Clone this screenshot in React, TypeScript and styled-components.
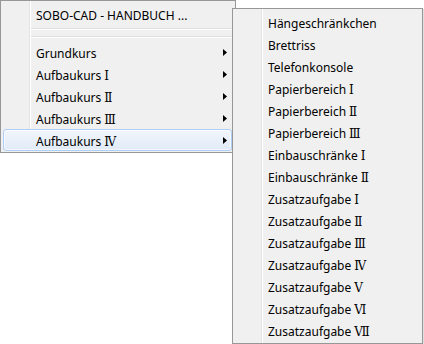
import React from "react";
import styled, { createGlobalStyle } from "styled-components";

const GlobalStyle = createGlobalStyle`
  html, body {
    margin: 0;
    padding: 0;
    background: #ffffff;
  }
  body {
    font-family: "Noto Sans", "DejaVu Sans", sans-serif;
    font-size: 12px;
    color: #000;
  }
`;

// label text + roman numeral (rendered with a serif fallback like the original)
const mainItems = [
  { label: "Grundkurs" },
  { label: "Aufbaukurs", num: "Ⅰ" },
  { label: "Aufbaukurs", num: "Ⅱ" },
  { label: "Aufbaukurs", num: "Ⅲ" },
  { label: "Aufbaukurs", num: "Ⅳ", active: true },
];

const subItems = [
  { label: "Hängeschränkchen" },
  { label: "Brettriss" },
  { label: "Telefonkonsole" },
  { label: "Papierbereich", num: "Ⅰ" },
  { label: "Papierbereich", num: "Ⅱ" },
  { label: "Papierbereich", num: "Ⅲ" },
  { label: "Einbauschränke", num: "Ⅰ" },
  { label: "Einbauschränke", num: "Ⅱ" },
  { label: "Zusatzaufgabe", num: "Ⅰ" },
  { label: "Zusatzaufgabe", num: "Ⅱ" },
  { label: "Zusatzaufgabe", num: "Ⅲ" },
  { label: "Zusatzaufgabe", num: "Ⅳ" },
  { label: "Zusatzaufgabe", num: "Ⅴ" },
  { label: "Zusatzaufgabe", num: "Ⅵ" },
  { label: "Zusatzaufgabe", num: "Ⅶ" },
];

function Arrow() {
  return (
    <svg width="4" height="7" viewBox="0 0 4 7">
      <polygon points="0,0 4,3.5 0,7" fill="#000" />
    </svg>
  );
}

function ItemText({ label, num }: { label: string; num?: string }) {
  return (
    <Label>
      {label}
      {num && <Numeral>{num}</Numeral>}
    </Label>
  );
}

function App() {
  return (
    <>
      <GlobalStyle />
      <Screen>
        <MainMenu>
          <Row>
            <Label>SOBO-CAD - HANDBUCH ...</Label>
          </Row>
          <Separator />
          <Separator />
          {mainItems.map((item, idx) => (
            <Row key={idx} active={item.active}>
              <ItemText label={item.label} num={item.num} />
              <Arrow />
            </Row>
          ))}
        </MainMenu>
        <SubMenu>
          {subItems.map((item, idx) => (
            <Row key={idx}>
              <ItemText label={item.label} num={item.num} />
            </Row>
          ))}
        </SubMenu>
      </Screen>
    </>
  );
}

const Screen = styled.div`
  position: relative;
  width: 424px;
  height: 344px;
  overflow: hidden;
`;

const Menu = styled.div`
  box-sizing: border-box;
  border: 1px solid #979797;
  background: linear-gradient(
    to right,
    #f0f0f0 28px,
    #e2e3e3 28px,
    #e2e3e3 29px,
    #ffffff 29px,
    #ffffff 30px,
    #f0f0f0 30px
  );
  display: flex;
  flex-direction: column;
`;

const MainMenu = styled(Menu)`
  width: 236px;
  height: 153px;
  padding: 2px 3px 1px 2px;
`;

const SubMenu = styled(Menu)`
  position: absolute;
  left: 232px;
  top: 8px;
  width: 191px;
  height: 336px;
  padding: 2px 3px 2px 2px;
  box-shadow: 1px 1px 0 rgba(0, 0, 0, 0.12);
`;

const Row = styled.div<{ active?: boolean }>`
  box-sizing: border-box;
  height: 22px;
  display: flex;
  align-items: center;
  padding: 0 4px 0 32px;
  border: 1px solid ${(p) => (p.active ? "#aecff7" : "transparent")};
  border-radius: 3px;
  background: ${(p) =>
    p.active ? "linear-gradient(to bottom, #f2f6fc, #e1eaf7)" : "transparent"};
  box-shadow: ${(p) =>
    p.active ? "inset 0 0 0 1px rgba(255,255,255,0.6)" : "none"};
`;

const Label = styled.span`
  flex: 1;
  white-space: nowrap;
  line-height: 16px;
  padding-top: 3px;
`;

const Numeral = styled.span`
  margin-left: 3px;
  font-family: "DejaVu Serif", "Liberation Serif", serif;
  font-size: 12px;
`;

const Separator = styled.div`
  height: 8px;
  margin-left: 28px;
  display: flex;
  flex-direction: column;
  justify-content: center;
  &::before {
    content: "";
    display: block;
    height: 1px;
    background: #e0e0e0;
    border-bottom: 1px solid #ffffff;
  }
`;

export default App;
